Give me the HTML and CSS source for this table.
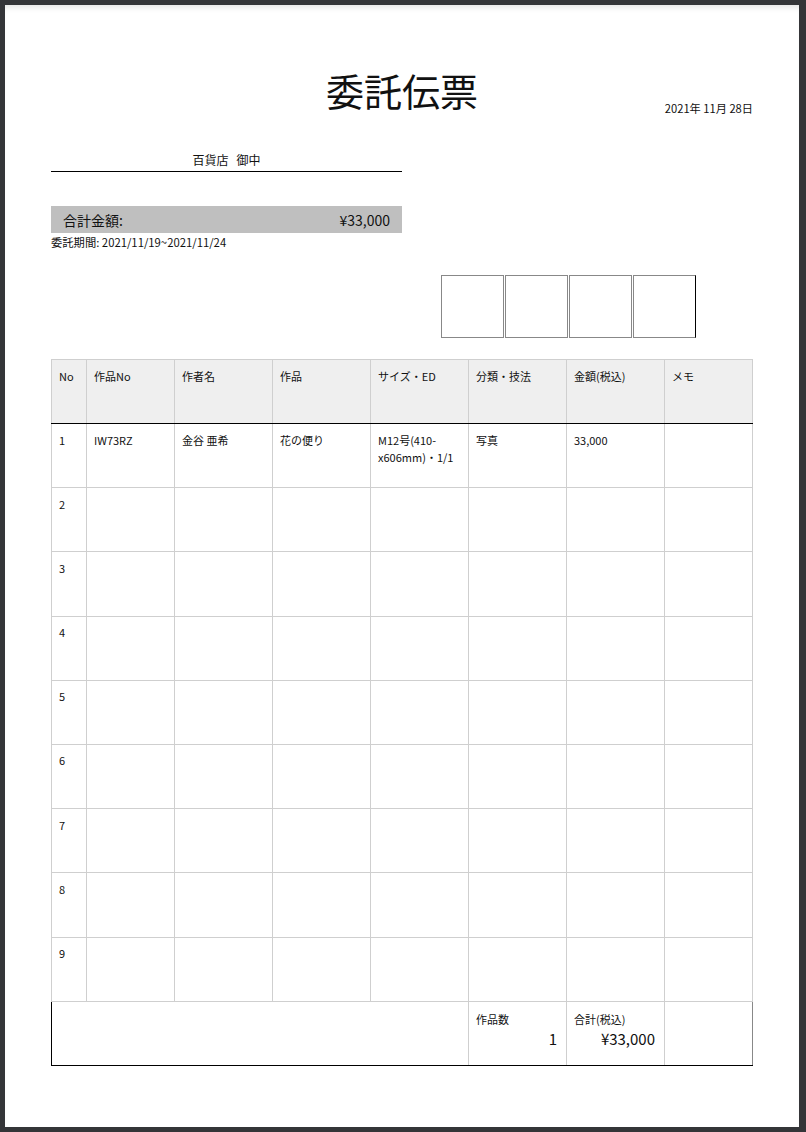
FILE: index.html
```html
<!DOCTYPE html>
<html lang="ja">
<head>
<meta charset="utf-8">
<title>委託伝票</title>
<link rel="stylesheet" href="styles.css">
</head>
<body>
<div class="page">
  <header class="head">
    <div></div>
    <h1 class="title">委託伝票</h1>
    <div class="date">2021年 11月 28日</div>
  </header>

  <div class="to">百貨店&nbsp;&nbsp;&nbsp;御中</div>

  <div class="total-box">
    <span>合計金額:</span>
    <span>¥33,000</span>
  </div>
  <div class="period">委託期間: 2021/11/19~2021/11/24</div>

  <div class="stamps">
    <div class="stamp"></div>
    <div class="stamp"></div>
    <div class="stamp"></div>
    <div class="stamp last"></div>
  </div>

  <table class="items">
    <colgroup>
      <col class="c-no">
      <col class="c-wno">
      <col class="c-mid">
      <col class="c-mid">
      <col class="c-mid">
      <col class="c-mid">
      <col class="c-mid">
      <col class="c-memo">
    </colgroup>
    <thead>
      <tr>
        <th>No</th><th>作品No</th><th>作者名</th><th>作品</th><th>サイズ・ED</th><th>分類・技法</th><th>金額(税込)</th><th>メモ</th>
      </tr>
    </thead>
    <tbody>
      <tr><td>1</td><td>IW73RZ</td><td>金谷 亜希</td><td>花の便り</td><td>M12号(410-x606mm)・1/1</td><td>写真</td><td>33,000</td><td></td></tr>
      <tr><td>2</td><td></td><td></td><td></td><td></td><td></td><td></td><td></td></tr>
      <tr><td>3</td><td></td><td></td><td></td><td></td><td></td><td></td><td></td></tr>
      <tr><td>4</td><td></td><td></td><td></td><td></td><td></td><td></td><td></td></tr>
      <tr><td>5</td><td></td><td></td><td></td><td></td><td></td><td></td><td></td></tr>
      <tr><td>6</td><td></td><td></td><td></td><td></td><td></td><td></td><td></td></tr>
      <tr><td>7</td><td></td><td></td><td></td><td></td><td></td><td></td><td></td></tr>
      <tr><td>8</td><td></td><td></td><td></td><td></td><td></td><td></td><td></td></tr>
      <tr><td>9</td><td></td><td></td><td></td><td></td><td></td><td></td><td></td></tr>
    </tbody>
    <tfoot>
      <tr>
        <td colspan="5" class="f-blank"></td>
        <td class="f-sum"><div class="f-label">作品数</div><div class="f-val">1</div></td>
        <td class="f-sum"><div class="f-label">合計(税込)</div><div class="f-val">¥33,000</div></td>
        <td class="f-last"></td>
      </tr>
    </tfoot>
  </table>
</div>
</body>
</html>
```

FILE: styles.css
```css
html, body {
  margin: 0;
  padding: 0;
}
body {
  background: #343538;
  font-family: "Noto Sans CJK JP", "Noto Sans", sans-serif;
  color: #111;
}
.page {
  box-sizing: border-box;
  width: 794px;
  height: 1122px;
  margin: 5px 7px 5px 5px;
  background: #fff;
  padding: 0 46px;
  box-shadow: inset 0 6px 6px -4px rgba(0,0,0,0.12);
  overflow: hidden;
}
.head {
  display: grid;
  grid-template-columns: 1fr auto 1fr;
  align-items: end;
  padding-top: 60px;
}
.title {
  margin: 0;
  font-size: 38px;
  font-weight: 400;
  line-height: 50px;
  letter-spacing: 0;
}
.date {
  justify-self: end;
  font-size: 11.2px;
  line-height: 14px;
  margin-bottom: 0;
}
.to {
  width: 351px;
  margin-top: 37px;
  text-align: center;
  font-size: 12px;
  line-height: 16px;
  padding-bottom: 3px;
  border-bottom: 1.5px solid #000;
}
.total-box {
  width: 351px;
  box-sizing: border-box;
  margin-top: 34px;
  height: 27px;
  background: #bfbfbf;
  display: flex;
  justify-content: space-between;
  align-items: center;
  padding: 0 12px;
  font-size: 14px;
}
.period {
  font-size: 11.3px;
  line-height: 16px;
  margin-top: 1px;
}
.stamps {
  display: flex;
  justify-content: flex-end;
  gap: 1px;
  margin-top: 25px;
  margin-right: 57px;
}
.stamp {
  box-sizing: border-box;
  width: 63px;
  height: 63px;
  border: 1.5px solid #888;
}
.stamp.last {
  border-right-color: #000;
}
.items {
  margin-top: 21px;
  width: 702px;
  border-collapse: collapse;
  table-layout: fixed;
  font-size: 11px;
}
.c-no { width: 35px; }
.c-wno { width: 88px; }
.c-mid { width: 98px; }
.c-memo { width: 88px; }
.items th, .items td {
  border: 1px solid #cfcfcf;
  vertical-align: top;
  text-align: left;
  padding: 7.5px 7px 0;
  height: 55.7px;
  font-weight: 400;
  line-height: 17px;
  box-sizing: content-box;
}
.items thead th {
  background: #efefef;
  height: 55.5px;
  border-bottom: 1.5px solid #000;
}
.items tfoot td {
  border-top: 1.5px solid #888;
  border-bottom: 1.5px solid #000;
  padding-top: 7px;
  height: 56px;
  padding-bottom: 0;
}
.items tfoot .f-blank {
  border-left: 1.5px solid #000;
}
.items tfoot .f-last {
  border-right: 1.5px solid #888;
}
.f-label {
  font-size: 11px;
  line-height: 20px;
}
.f-val {
  text-align: right;
  font-size: 15px;
  line-height: 19px;
  padding-right: 2px;
}
```
